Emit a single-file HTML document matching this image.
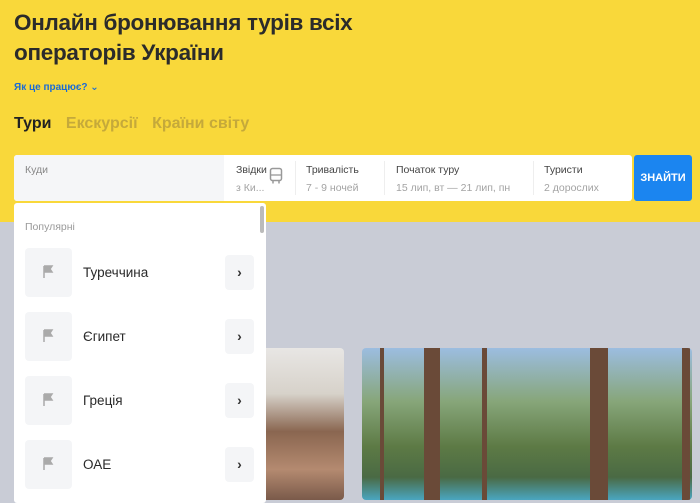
<!DOCTYPE html>
<html><head><meta charset="utf-8"><style>
*{margin:0;padding:0;box-sizing:border-box}
body{width:700px;height:500px;overflow:hidden;background:#c9ccd6;font-family:"Liberation Sans","DejaVu Sans",sans-serif;position:relative}
.y{position:absolute;left:0;top:0;width:700px;height:222px;background:#f9d83a}
h1{position:absolute;left:14px;top:8px;font-size:22.5px;line-height:30px;color:#2b2b2b;font-weight:bold;letter-spacing:-0.3px}
.how{position:absolute;left:14px;top:82px;font-size:10px;color:#1a6bd6;font-weight:bold}
.tabs{position:absolute;left:14px;top:115px;font-size:16px;font-weight:bold;color:#c5a93a;white-space:nowrap}
.tabs span{margin-right:10px}
.tabs .a{color:#222}
.bar{position:absolute;left:14px;top:155px;width:618px;height:46px;background:#fff;border-radius:3px}
.f{position:absolute;top:0;height:46px;font-size:10.5px}
.f .l{position:absolute;top:9px;color:#444;white-space:nowrap}
.f .v{position:absolute;top:27px;color:#a3a3a3;white-space:nowrap}
.dv{position:absolute;top:6px;width:1px;height:34px;background:#eee}
.btn{position:absolute;left:634px;top:155px;width:58px;height:46px;background:#1b85f0;border-radius:3px;color:#fff;font-size:11px;font-weight:bold;text-align:center;line-height:46px}
.dd{position:absolute;left:14px;top:203px;width:252px;height:300px;background:#fff;border-radius:3px}
.sb{position:absolute;left:246px;top:3px;width:4px;height:27px;background:#bbb;border-radius:2px}
.pop{position:absolute;left:11px;top:18px;font-size:10.5px;color:#999}
.it{position:absolute;left:11px;width:230px;height:49px}
.ic{position:absolute;left:0;top:0;width:47px;height:49px;background:#f4f5f7;border-radius:4px}
.ic svg{position:absolute;left:17px;top:17px}
.nm{position:absolute;left:58px;top:17px;font-size:13.5px;color:#2a2a2a}
.ar{position:absolute;left:200px;top:7px;width:29px;height:35px;background:#f4f5f7;border-radius:4px;text-align:center;line-height:34px;font-size:14px;color:#333;font-weight:bold}
.p1{position:absolute;left:240px;top:348px;width:104px;height:152px;border-radius:4px;background:linear-gradient(180deg,#e8e6e4 0%,#d7d2ca 30%,#8a6650 55%,#b48a70 80%,#7a5a4a 100%)}
.p2{position:absolute;left:362px;top:348px;width:330px;height:152px;border-radius:4px;overflow:hidden;background:linear-gradient(180deg,#9cbde0 0%,#87a67a 35%,#5d7a45 65%,#4a6a44 85%,#4aa6c0 100%)}
.t{position:absolute;top:0;height:152px;background:#6a4a38}
</style></head><body>
<div class="y"></div>
<h1>Онлайн бронювання турів всіх<br>операторів України</h1>
<div class="how">Як це працює? &#8964;</div>
<div class="tabs"><span class="a">Тури</span> <span>Екскурсії</span> <span>Країни світу</span></div>
<div class="p1"></div>
<div class="p2"><div class="t" style="left:62px;width:16px"></div><div class="t" style="left:228px;width:18px"></div><div class="t" style="left:320px;width:8px"></div><div class="t" style="left:120px;width:5px"></div><div class="t" style="left:18px;width:4px"></div></div>
<div class="bar">
 <div class="f" style="left:0;width:210px;background:#f5f6f8;border-radius:3px 0 0 3px"><div class="l" style="left:11px;color:#888">Куди</div></div>
 <div class="f" style="left:222px"><div class="l">Звідки</div><div class="v">з Ки...</div></div>
 <svg style="position:absolute;left:255px;top:12px" width="14" height="18" viewBox="0 0 14 18"><rect x="1.5" y="1.5" width="11" height="12" rx="2" fill="none" stroke="#999" stroke-width="1.5"/><line x1="1.5" y1="8" x2="12.5" y2="8" stroke="#999" stroke-width="1.3"/><line x1="4" y1="14" x2="4" y2="16.5" stroke="#999" stroke-width="1.5"/><line x1="10" y1="14" x2="10" y2="16.5" stroke="#999" stroke-width="1.5"/></svg>
 <div class="dv" style="left:281px"></div>
 <div class="f" style="left:292px"><div class="l">Тривалість</div><div class="v">7 - 9 ночей</div></div>
 <div class="dv" style="left:370px"></div>
 <div class="f" style="left:382px"><div class="l">Початок туру</div><div class="v">15 лип, вт — 21 лип, пн</div></div>
 <div class="dv" style="left:519px"></div>
 <div class="f" style="left:530px"><div class="l">Туристи</div><div class="v">2 дорослих</div></div>
</div>
<div class="btn">ЗНАЙТИ</div>
<div class="dd">
 <div class="sb"></div>
 <div class="pop">Популярні</div>
 <div class="it" style="top:45px"><div class="ic"><svg width="12" height="14" viewBox="0 0 12 14"><path d="M2 1v12M2 1h8l-2 3 2 3H2" fill="#aaa" stroke="#aaa" stroke-width="1.5"/></svg></div><div class="nm">Туреччина</div><div class="ar">›</div></div>
 <div class="it" style="top:109px"><div class="ic"><svg width="12" height="14" viewBox="0 0 12 14"><path d="M2 1v12M2 1h8l-2 3 2 3H2" fill="#aaa" stroke="#aaa" stroke-width="1.5"/></svg></div><div class="nm">Єгипет</div><div class="ar">›</div></div>
 <div class="it" style="top:173px"><div class="ic"><svg width="12" height="14" viewBox="0 0 12 14"><path d="M2 1v12M2 1h8l-2 3 2 3H2" fill="#aaa" stroke="#aaa" stroke-width="1.5"/></svg></div><div class="nm">Греція</div><div class="ar">›</div></div>
 <div class="it" style="top:237px"><div class="ic"><svg width="12" height="14" viewBox="0 0 12 14"><path d="M2 1v12M2 1h8l-2 3 2 3H2" fill="#aaa" stroke="#aaa" stroke-width="1.5"/></svg></div><div class="nm">ОАЕ</div><div class="ar">›</div></div>
</div>
</body></html>
